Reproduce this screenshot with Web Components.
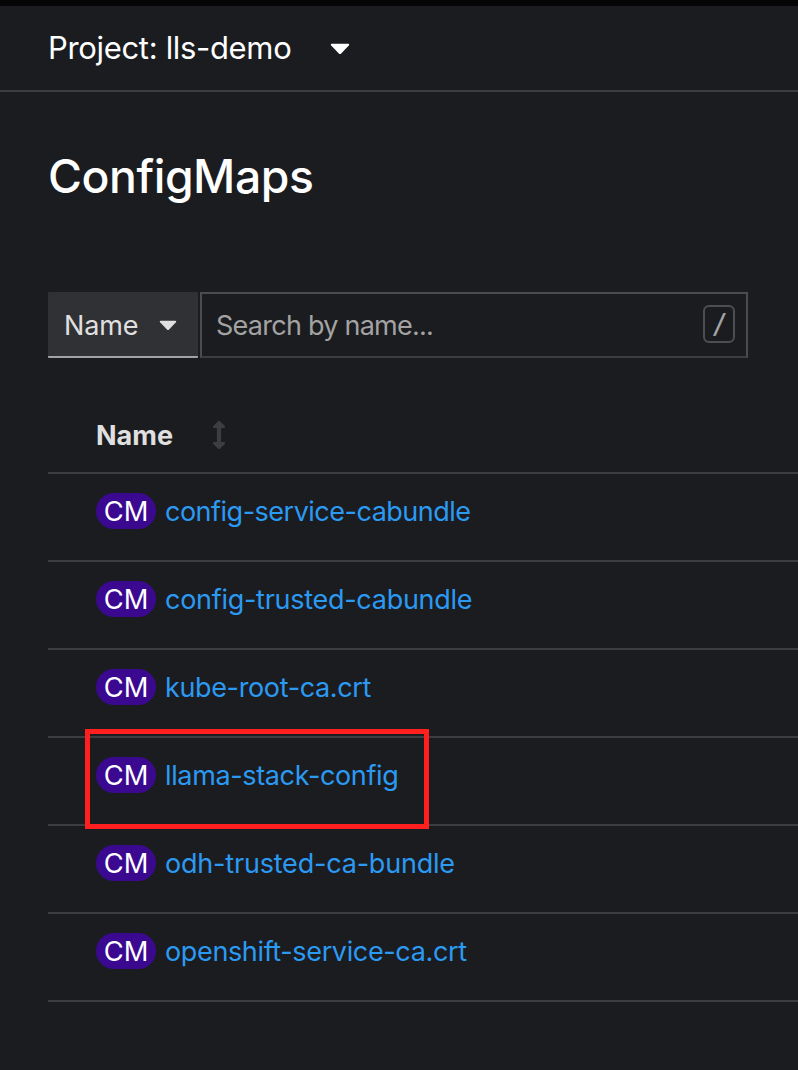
<!DOCTYPE html>
<html lang="en">
<head>
<meta charset="utf-8">
<title>ConfigMaps</title>
<style>
html,body{margin:0;height:100%;background:#1b1c20}
body{font-family:Inter,"Liberation Sans",sans-serif;color:#e0e0e0;overflow:hidden}
</style>
</head>
<body>
<console-page></console-page>
<script>
const define=(name,markup)=>customElements.define(name,class extends HTMLElement{
  connectedCallback(){
    if(this.shadowRoot)return;
    const t=document.createElement('template');
    t.innerHTML=markup;
    this.attachShadow({mode:'open'}).append(t.content.cloneNode(true));
  }
});

define('caret-icon',`<style>:host{display:block;line-height:0}svg{display:block;width:100%;height:auto;fill:currentColor}</style>
<svg viewBox="0 0 20 12"><path d="M1.7 0.7H18.3Q20 1 18.8 2.5L11.2 10.5Q10 11.7 8.8 10.5L1.2 2.5Q0 1 1.7 .7Z"/></svg>`);

define('sort-icon',`<style>:host{display:block;color:#3c3d3f}svg{display:block;fill:currentColor}</style>
<svg width="14" height="30" viewBox="0 0 14 30"><path d="M7 .8Q7.7.8 8.2 1.4L12.6 5.8Q13.3 6.6 13 7.3T12 8.1H9.1V21.9H12Q12.7 21.9 13 22.7T12.6 24.2L8.2 28.5Q7 29.7 5.8 28.5L1.4 24.2Q.7 23.4 1 22.7T2 21.9H4.9V8.1H2Q1.3 8.1 1 7.3T1.4 5.8L5.8 1.4Q6.3.8 7 .8Z"/></svg>`);

define('project-bar',`<style>
:host{display:flex;align-items:center;box-sizing:border-box;height:92px;border-top:6px solid #050505;border-bottom:2px solid #3c3d41;padding:0 0 0 48px;color:#fff}
span{font-size:31px;line-height:40px;letter-spacing:-.33px;width:282px;white-space:nowrap}
caret-icon{width:20px;margin-top:1px}
</style><span><slot></slot></span><caret-icon></caret-icon>`);

define('page-title',`<style>:host{display:block;box-sizing:border-box;padding:56px 48px 0;height:144px}
h1{margin:0;font-weight:500;font-size:46.3px;line-height:56px;letter-spacing:-.45px;color:#fff}</style><h1><slot></slot></h1>`);

define('filter-select',`<style>
:host{display:flex;align-items:center;box-sizing:border-box;width:150px;height:66px;padding:0 0 0 16px;background:#303134;border-bottom:2px solid #a3a3a5;border-radius:1px;font-size:27px;color:#e0e0e0}
span{width:95px;line-height:34px;padding-top:4px;letter-spacing:-.1px}caret-icon{width:18px;margin-top:3px}
</style><span><slot></slot></span><caret-icon></caret-icon>`);

define('search-field',`<style>
:host{display:flex;align-items:center;justify-content:space-between;box-sizing:border-box;width:548px;height:66px;padding:0 11px 0 14px;border:2px solid #4b4c4e;border-bottom-color:#3c3d3f;font-size:27px;line-height:34px;letter-spacing:-.75px;color:#a3a3a3}
span{padding-top:2px}
kbd{box-sizing:border-box;width:32px;height:38px;margin-bottom:2px;border:2px solid #4d4e50;border-radius:6px;font:26px/33px Inter,sans-serif;text-align:center;color:#a8a8a8}
b{display:inline-block;font-weight:400;transform:skewX(-10deg);-webkit-text-stroke:.4px #a8a8a8}
</style><span><slot></slot></span><kbd><b>/</b></kbd>`);

define('tool-bar',`<style>:host{display:flex;gap:2px;padding:56px 0 0 48px}</style><slot></slot>`);

define('table-head',`<style>:host{display:flex;align-items:center;box-sizing:border-box;height:76px;padding:0 0 2px 48px;border-bottom:2px solid #3c3d3f;font-weight:700;font-size:27px;color:#e0e0e0}
span{width:116px;line-height:34px;padding-top:3px}sort-icon{margin-top:2px}</style><span><slot></slot></span><sort-icon></sort-icon>`);

define('kind-badge',`<style>:host{display:block;box-sizing:border-box;width:60px;height:36px;border-radius:18px;background:#3b0990;color:#fff;font-size:27.3px;line-height:37px;text-align:center}</style><slot></slot>`);

define('resource-row',`<style>
:host{display:flex;align-items:flex-start;gap:9px;box-sizing:border-box;height:88px;padding:19px 0 0 48px;border-bottom:2px solid #3c3d3f;position:relative}
a{color:#2b9af3;text-decoration:none;font-size:27px;line-height:38px;white-space:nowrap;letter-spacing:var(--track)}
:host([marked])::after{content:"";position:absolute;box-sizing:border-box;left:37px;top:-9px;width:344px;height:100px;border:5px solid #ff1f1f;z-index:2}
</style><kind-badge>CM</kind-badge><a><slot></slot></a>`);

define('resource-table',`<style>:host{display:block;margin:40px 0 0 48px}</style><table-head>Name</table-head><slot></slot>`);

define('console-page',`<style>:host{display:block;height:1070px;background:#1b1c20}</style>
<project-bar>Project: lls-demo</project-bar>
<page-title>ConfigMaps</page-title>
<tool-bar><filter-select>Name</filter-select><search-field>Search by name...</search-field></tool-bar>
<resource-table>
<resource-row style="--track:-.5px">config-service-cabundle</resource-row>
<resource-row style="--track:-.28px">config-trusted-cabundle</resource-row>
<resource-row style="--track:-.36px">kube-root-ca.crt</resource-row>
<resource-row style="--track:-.36px" marked>llama-stack-config</resource-row>
<resource-row style="--track:-.2px">odh-trusted-ca-bundle</resource-row>
<resource-row style="--track:-.36px">openshift-service-ca.crt</resource-row>
</resource-table>`);
</script>
</body>
</html>
